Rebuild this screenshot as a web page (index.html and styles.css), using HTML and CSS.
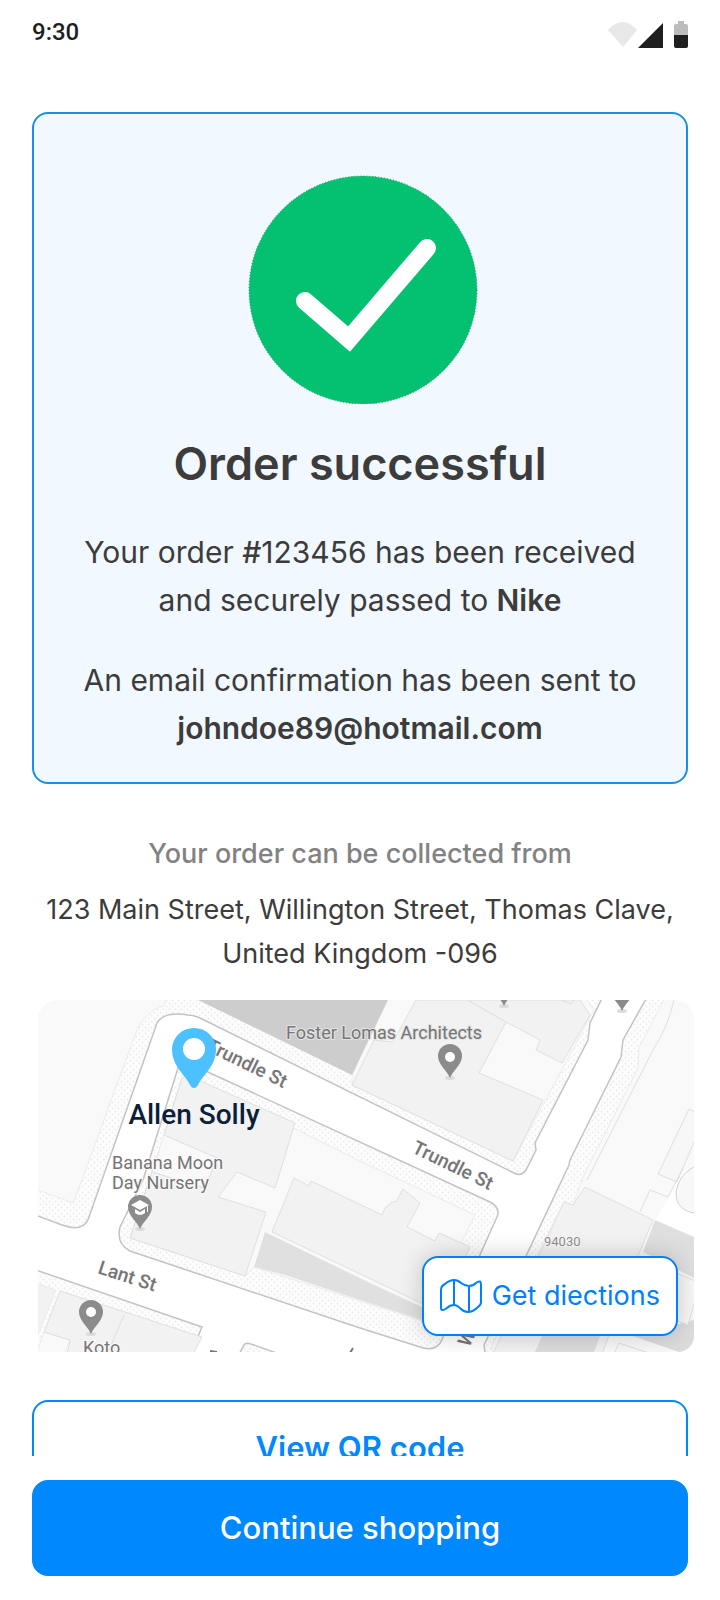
FILE: index.html
```html
<!DOCTYPE html>
<html lang="en">
<head>
<meta charset="utf-8">
<meta name="viewport" content="width=device-width, initial-scale=1">
<title>Order successful</title>
<link rel="stylesheet" href="styles.css">
</head>
<body>
<div class="screen">
  <header class="status">
    <span class="status-time">9:30</span>
    <svg class="status-icons" width="80" height="30" viewBox="0 0 80 30" aria-hidden="true">
      <path d="M0 10Q15-6 29 10L15 27Z" fill="#e8e8e8"/>
      <path d="M55 3V28H30Z" fill="#1f1f1f"/>
      <path d="M70 1h6v3h2a2 2 0 0 1 2 2v11H66V6a2 2 0 0 1 2-2h2Z" fill="#bcbcbc"/>
      <path d="M66 15h14v11a2 2 0 0 1-2 2H68a2 2 0 0 1-2-2Z" fill="#1f1f1f"/>
    </svg>
  </header>

  <main class="content">
    <section class="card">
      <svg class="card-check" width="236" height="230" viewBox="0 0 236 230" aria-hidden="true">
        <circle cx="121" cy="116" r="114" fill="#04c171" stroke="#2f8f66" stroke-width="1" stroke-dasharray="1 2"/>
        <path d="M63 127L107 165L185 74" fill="none" stroke="#fff" stroke-width="18" stroke-linecap="round" stroke-linejoin="miter"/>
      </svg>
      <h1 class="card-title">Order successful</h1>
      <p class="card-text">Your order <span class="mark">#</span>123456 has been received<br>and securely passed to <strong>Nike</strong></p>
      <p class="card-text">An email confirmation has been sent to<br><strong>johndoe89@hotmail.com</strong></p>
    </section>

    <section class="pickup">
      <h2 class="pickup-label">Your order can be collected from</h2>
      <p class="pickup-address">123 Main Street, Willington Street, Thomas Clave, United Kingdom -096</p>
      <div class="map">
        <svg class="map-art" viewBox="38 1000 656 352" preserveAspectRatio="xMidYMid slice" role="img" aria-label="Map of the collection point">
          <defs>
            <pattern id="dots" width="6" height="6" patternUnits="userSpaceOnUse">
              <rect width="6" height="6" fill="#fdfdfd"/>
              <circle cx="1.500" cy="1.500" r="0.900" fill="#ebebeb"/>
              <circle cx="4.500" cy="4.500" r="0.900" fill="#ebebeb"/>
            </pattern>
            <g id="pin">
              <ellipse cx="0" cy="0" rx="5" ry="2" fill="#dcdcdc"/>
              <path d="M0 0C-3-8-12-13-12-22A12 12 0 0 1 12-22C12-13 3-8 0 0Z" fill="#8b8b8b"/>
            </g>
          </defs>
          <rect x="38" y="1000" width="656" height="352" fill="#fff"/>

          <g fill="url(#dots)" stroke="#c3c3c3" stroke-width="1.500">
            <path d="M30 1213L62 1225Q84 1233 89 1217L157 1023Q164 1011 188 1015Q194 1015 202 1019L514 1173Q521 1177 526 1170L536 1150L535 1143L588 1040L590 1023L606 990H30Z"/>
            <path d="M143 1180L178 1068Q182 1058 192 1064L210 1073L490 1202Q501 1208 497 1217L443 1337Q438 1353 420 1347L360 1328L130 1251Q116 1244 120 1227Z"/>
            <path d="M651 990L623 1040L621 1057L570 1160L569 1165L484 1345L486 1360H710V990Z"/>
            <path d="M30 1268L202 1327L188 1360H30Z"/>
            <path d="M236 1360L244 1345Q246 1342 251 1344L285 1356Z"/>
          </g>

          <g fill="#f9f9f9" stroke="#ebebeb" stroke-width="1">
            <path d="M30 990H165V1005Q143 1012 135 1035L82 1180L73 1203L30 1187Z"/>
            <path d="M388 990L352 1076V1085L513 1161L594 1010L580 990Z"/>
            <path d="M182 1078L187 1075L360 1161L475 1215L422 1321L254 1267L245 1276L130 1238L152 1172Z"/>
            <path d="M669 990L639 1048L638 1068L583 1177L573 1205L564 1202L492 1345V1360H710V990Z"/>
            <path d="M30 1281L56 1290L36 1340L30 1360Z" fill="#f2f2f2"/>
            <path d="M44 1332L70 1340L62 1360H34Z"/>
          </g>

          <path d="M198 1000L352 1075L388 1000Z" fill="#cdcdcd"/>
          <path d="M265 1232L370 1283L422 1307V1320L360 1300L285 1275L254 1267Z" fill="#e0e0e0"/>
          <g fill="#f2f2f2" stroke="#dfdfdf" stroke-width="1">
            <path d="M416 1000L393 1042L374 1040L352 1085L513 1161L543 1100L479 1073L506 1022L468 1000Z"/>
            <path d="M468 1000L506 1022L540 1040L536 1050L562 1063L590 1015L580 1000Z"/>
            <path d="M182 1078L187 1075L295 1123L275 1188L237 1172L218 1197L266 1212L245 1276L130 1238L152 1172L205 1188L217 1158L164 1135Z"/>
            <path d="M294 1178L309 1186L311 1181L382 1215L385 1208L392 1202L396 1202L403 1189L420 1203L407 1227L435 1241L439 1233L470 1247L440 1312L272 1232Z"/>
            <path d="M564 1202L573 1205L585 1187L653 1220L638 1256L600 1360H490Z"/>
            <path d="M60 1291L202 1337L190 1360H66L70 1340L44 1332Z"/>
            <path d="M124 1315L109 1350M561 1000L571 1004L574 1000" fill="none"/>
          </g>
          <path d="M655 1220L670 1196L682 1170H694V1237Z" fill="#fff"/>
          <path d="M700 1165C676 1170 664 1208 694 1213H700Z" fill="#f8f8f8" stroke="#cfcfcf"/>
          <path d="M655 1220L694 1237V1278L643 1252Z" fill="#dfdfdf"/>
          <path d="M542 1336H600L594 1352H535ZM633 1336L694 1320V1352H679Z" fill="#dcdcdc"/>
          <g fill="#f7f7f7" stroke="#dedede">
            <path d="M674 1272L700 1283L688 1325L668 1317Z"/>
            <path d="M619 1343L664 1358H612Z"/>
            <path d="M689 1109L658 1174L677 1182L700 1128V1114Z"/>
            <path d="M674 1000Q668 1027 653 1050L587 1180M640 1212L650 1190L668 1197L683 1168" fill="none"/>
          </g>

          <use href="#pin" x="450" y="1078"/>
          <use href="#pin" x="504" y="1006"/>
          <use href="#pin" x="622" y="1011"/>
          <use href="#pin" x="140" y="1229"/>
          <use href="#pin" x="91" y="1334"/>
          <circle cx="450" cy="1057" r="5" fill="#fff"/>
          <circle cx="91" cy="1312" r="5" fill="#fff"/>
          <path d="M131 1205L140 1200L149 1205L140 1210ZM135 1209V1213Q140 1217 145 1213V1209L140 1212ZM147 1206H148V1212H147Z" fill="#fff"/>

          <g class="map-names">
            <text class="map-plain" x="286" y="1039">Foster Lomas Architects</text>
            <text x="112" y="1169">Banana Moon</text>
            <text x="112" y="1189">Day Nursery</text>
            <text x="83" y="1354">Koto</text>
            <text class="map-small" x="544" y="1246">94030</text>
          </g>
          <g class="map-streets">
            <text transform="translate(205 1050) rotate(26)">Trundle St</text>
            <text transform="translate(411 1152) rotate(26)">Trundle St</text>
            <text transform="translate(97 1273) rotate(18)">Lant St</text>
            <text transform="translate(469 1348) rotate(-64)">W</text>
          </g>
          <path d="M210 1351L217 1352M350 1353L353 1348" stroke="#777" stroke-width="2"/>

          <path d="M194 1088Q191 1088 189 1083C183 1073 172 1065 172 1049A22 21 0 0 1 216 1049C216 1065 205 1073 199 1083Q197 1088 194 1088Z" fill="#4dc1ff"/>
          <circle cx="194" cy="1049" r="11" fill="#fff"/>
          <text class="map-place" x="194" y="1124">Allen Solly</text>
        </svg>
        <button class="directions" type="button">
          <svg width="42" height="36" viewBox="0 0 42 36" fill="none" stroke="currentColor" stroke-width="2" stroke-linejoin="round" aria-hidden="true">
            <path d="M14 2Q18 2 21 5Q25 8 29 8Q33 8 36 5Q41 1 41 7V24Q41 27 38 29Q33 34 28 34Q24 34 21 31Q17 27 14 27Q10 27 7 30Q1 34 1 30V12Q1 8 5 6Q10 2 14 2ZM14 2V27M29 8V34"/>
          </svg>
          <span>Get diections</span>
        </button>
      </div>
    </section>

    <button class="btn btn-outline" type="button">View QR code</button>
  </main>

  <footer class="actions">
    <button class="btn btn-primary" type="button">Continue shopping</button>
  </footer>
</div>
</body>
</html>
```

FILE: styles.css
```css
* {
  box-sizing: border-box;
  margin: 0;
}

body {
  background: #fff;
  color: #3c3c3c;
  font-family: Inter, "Liberation Sans", sans-serif;
}

.screen {
  display: flex;
  flex-direction: column;
  height: 100vh;
}

.status {
  display: flex;
  justify-content: space-between;
  align-items: center;
  padding: 16px 32px;
  height: 64px;
}

.status-time {
  color: #1f1f1f;
  font: 500 24px/32px Roboto, sans-serif;
}

.status-icons {
  margin-top: 6px;
}

.content {
  display: flex;
  flex: 1;
  flex-direction: column;
  min-height: 0;
  overflow: hidden;
  padding: 48px 32px 0;
}

.content > * {
  flex-shrink: 0;
}

.card {
  display: flex;
  flex-direction: column;
  align-items: center;
  padding: 60px 24px 30px;
  border: 2px solid #1a8fe6;
  border-radius: 16px;
  background: #f1f8ff;
  text-align: center;
}

.card-title {
  margin-top: 30px;
  font-size: 45px;
  font-weight: 600;
  line-height: 60px;
}

.card-text {
  margin-top: 32px;
  font-size: 30px;
  line-height: 48px;
}

.card-title + .card-text {
  margin-top: 34px;
}

.card-text strong {
  font-weight: 600;
}

.mark {
  font-weight: 500;
}

.pickup {
  margin-top: 50px;
  text-align: center;
}

.pickup-label {
  color: #828282;
  font-size: 27px;
  font-weight: 500;
  line-height: 40px;
}

.pickup-address {
  margin-top: 14px;
  font-size: 27px;
  line-height: 44px;
}

.map {
  position: relative;
  margin: 24px -6px 0 6px;
  border-radius: 20px 20px 16px 0;
  overflow: hidden;
}

.map-art {
  display: block;
  width: 100%;
}

.map-names,
.map-streets {
  fill: #757575;
  stroke: #fafafa;
  stroke-width: 2px;
  paint-order: stroke;
  font: 400 18px Roboto, sans-serif;
}

.map-plain {
  stroke: #e4e4e4;
}

.map-streets {
  font-size: 19px;
  font-weight: 500;
}

.map-small {
  fill: #8c8c8c;
  font-size: 13px;
}

.map-place {
  fill: #0c1f3a;
  font: 500 28px Roboto, sans-serif;
  text-anchor: middle;
}

.directions {
  position: absolute;
  right: 16px;
  bottom: 16px;
  display: flex;
  align-items: center;
  gap: 10px;
  height: 80px;
  padding: 0 16px;
  border: 2px solid #0080ff;
  border-radius: 16px;
  background: #fff;
  box-shadow: 0 0 24px rgba(0, 0, 0, 0.200);
  color: #0080ff;
  font: 400 27px/40px Inter, sans-serif;
}

.btn {
  width: 100%;
  height: 96px;
  border: 2px solid #0088ff;
  border-radius: 16px;
  font: 600 31px/40px Inter, sans-serif;
}

.btn-outline {
  margin-top: 48px;
  background: #fff;
  color: #0088ff;
}

.btn-primary {
  background: #0088ff;
  color: #fff;
  font-weight: 500;
}

.actions {
  padding: 24px 32px;
}
```
